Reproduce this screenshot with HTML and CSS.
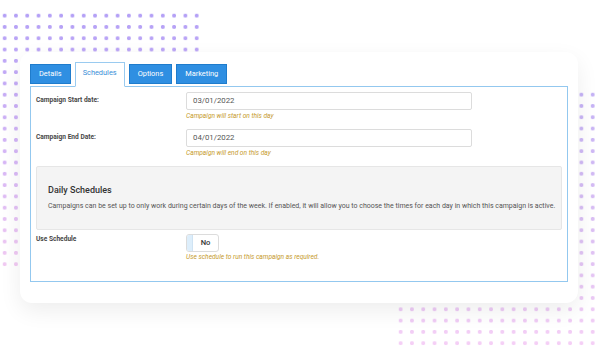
FILE: index.html
```html
<!DOCTYPE html>
<html>
<head>
<meta charset="utf-8">
<link rel="stylesheet" href="styles.css">
</head>
<body>
<div class="stage">
  <div class="dots dots-tl"></div>
  <div class="dots dots-br"></div>
  <div class="card">
    <div class="tabs">
      <span class="tab">Details</span>
      <span class="tab active">Schedules</span>
      <span class="tab">Options</span>
      <span class="tab">Marketing</span>
    </div>
    <div class="panel">
      <div class="row">
        <div class="lbl">Campaign Start date:</div>
        <div class="field">
          <div class="input">03/01/2022</div>
          <div class="help">Campaign will start on this day</div>
        </div>
      </div>
      <div class="row">
        <div class="lbl">Campaign End Date:</div>
        <div class="field">
          <div class="input">04/01/2022</div>
          <div class="help">Campaign will end on this day</div>
        </div>
      </div>
      <div class="box">
        <div class="box-title">Daily Schedules</div>
        <div class="box-text">Campaigns can be set up to only work during certain days of the week. If enabled, it will allow you to choose the times for each day in which this campaign is active.</div>
      </div>
      <div class="row row-toggle">
        <div class="lbl lbl-top">Use Schedule</div>
        <div class="field">
          <div class="toggle"><span class="toggle-knob"></span><span class="toggle-text">No</span></div>
          <div class="help help-wide">Use schedule to run this campaign as required.</div>
        </div>
      </div>
    </div>
  </div>
</div>
</body>
</html>
```
FILE: styles.css
```css
* { box-sizing: border-box; }
html, body { margin: 0; padding: 0; background: #fff; }
body {
  font-family: Roboto, "Liberation Sans", sans-serif;
  width: 600px;
  height: 359px;
  overflow: hidden;
}
.stage {
  position: relative;
  height: 359px;
  padding: 52px 22px 0 20px;
}
.dots {
  position: absolute;
  -webkit-mask-image: radial-gradient(circle at center, #000 1.7px, transparent 2.3px);
  -webkit-mask-size: 11.3px 11.3px;
  mask-image: radial-gradient(circle at center, #000 1.7px, transparent 2.3px);
  mask-size: 11.3px 11.3px;
}
.dots-tl {
  left: -1.35px;
  top: 10px;
  width: 203.4px;
  height: 259.9px;
  background: linear-gradient(#b3a0f6, #d8b8f6 60%, #f2cbf2);
}
.dots-br {
  left: 395.35px;
  top: 89.35px;
  width: 216px;
  height: 259.9px;
  background: linear-gradient(#c4b2f6, #dcc0f4 55%, #f6d0f6);
}
.card {
  position: relative;
  background: #fff;
  border-radius: 12px;
  box-shadow: 0 8px 22px rgba(0, 0, 0, 0.07);
  height: 251px;
  padding: 10px 10px 0 10px;
}
.tabs {
  display: flex;
  align-items: flex-end;
  gap: 4px;
  height: 25px;
  position: relative;
  z-index: 2;
  margin-bottom: -1px;
}
.tab {
  display: flex;
  align-items: center;
  justify-content: center;
  height: 20px;
  margin-bottom: 3px;
  padding: 0 8px;
  background: #2f8fe2;
  border: 1px solid #1f7ccc;
  color: #fff;
  font-size: 7.4px;
  line-height: 1;
}
.tab.active {
  height: 25px;
  margin-bottom: 0;
  padding: 0 7px 4px;
  background: #fff;
  border: 1px solid #9acbf0;
  border-bottom-color: #fff;
  color: #3a8fd8;
}
.panel {
  border: 1px solid #93c8ef;
  height: 196px;
  padding: 5px 5px 0 5px;
}
.row {
  display: flex;
  align-items: flex-start;
  margin-bottom: 9px;
}
.lbl {
  width: 150px;
  flex: none;
  font-size: 6.6px;
  font-weight: 700;
  color: #474747;
  line-height: 17px;
}
.lbl-top { line-height: 10px; }
.field { display: flex; flex-direction: column; }
.input {
  width: 286px;
  height: 18px;
  border: 1px solid #dcdcdc;
  border-radius: 2px;
  padding: 0 6px;
  font-size: 7.8px;
  color: #555;
  line-height: 16px;
}
.help {
  margin-top: 2px;
  font-size: 6.6px;
  font-style: italic;
  color: #c69a2b;
  line-height: 8px;
}
.box {
  background: #f4f4f4;
  border: 1px solid #e6e6e6;
  border-radius: 2px;
  height: 64px;
  padding: 17px 11px 0 11px;
  margin-bottom: 4px;
}
.box-title {
  font-size: 9px;
  font-weight: 500;
  color: #333;
  line-height: 12px;
}
.box-text {
  margin-top: 5px;
  font-size: 7px;
  color: #555;
  line-height: 10px;
  white-space: nowrap;
}
.row-toggle { margin-bottom: 0; }
.toggle {
  display: flex;
  width: 33px;
  height: 18px;
  border: 1px solid #dcdcdc;
  border-radius: 3px;
  overflow: hidden;
}
.toggle-knob {
  width: 6px;
  background: #ddeefb;
  border-right: 1px solid #cfe3f3;
}
.toggle-text {
  flex: 1;
  text-align: center;
  font-size: 7.6px;
  font-weight: 500;
  color: #333;
  line-height: 16px;
}
.help-wide { margin-top: 1px; }
```
